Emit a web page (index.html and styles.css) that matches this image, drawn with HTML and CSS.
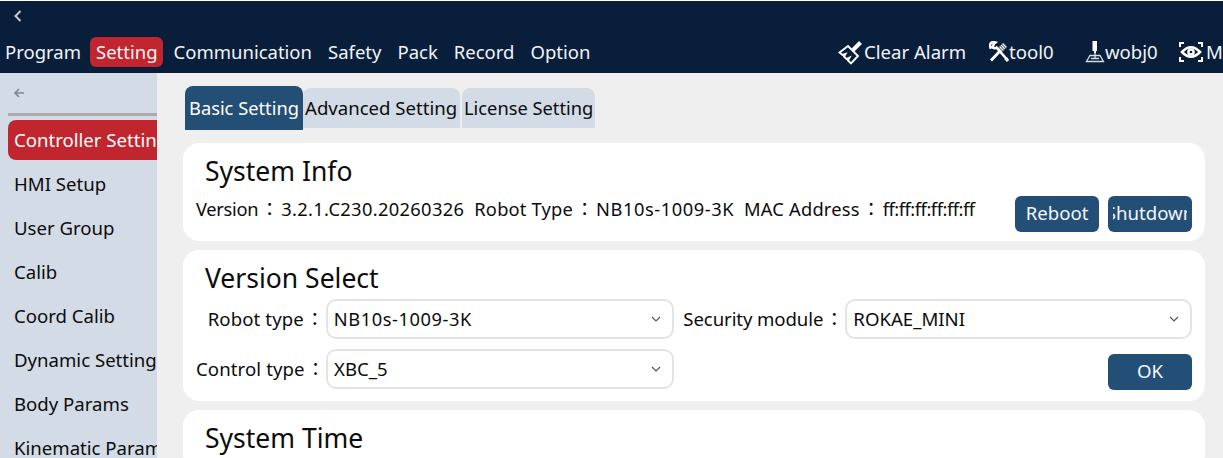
FILE: index.html
```html
<!DOCTYPE html>
<html lang="en">
<head>
<meta charset="utf-8">
<title>Setting</title>
<link rel="stylesheet" href="styles.css">
</head>
<body>
<div class="app">
  <header class="header">
    <div class="back-row">
      <svg class="chev" viewBox="0 0 10 14" width="10" height="14"><path d="M7.5 2 L2.5 7 L7.5 12" fill="none" stroke="#c4c9d0" stroke-width="2"/></svg>
    </div>
    <nav class="nav">
      <div class="menu">
        <span class="menu-item">Program</span>
        <span class="menu-item active">Setting</span>
        <span class="menu-item">Communication</span>
        <span class="menu-item">Safety</span>
        <span class="menu-item">Pack</span>
        <span class="menu-item">Record</span>
        <span class="menu-item">Option</span>
      </div>
      <div class="status">
        <span class="status-item s-alarm">
          <svg viewBox="0 0 26 26" width="26" height="26"><g fill="none" stroke="#fff" stroke-linejoin="miter"><path d="M1.5 13.5 L10 7 L20 17 L13 24.5 L10 21.5 L11.5 18.5 L8.5 20 L6 17.5 L7.5 15 L4.5 16 Z" stroke-width="1.9"/><path d="M15 11 L22.5 3.5" stroke-width="4"/></g></svg>
          Clear Alarm</span>
        <span class="status-item s-tool">
          <svg viewBox="0 0 20 22" width="20" height="22"><g fill="none" stroke="#fff"><path d="M6.5 1.5 C2.5 0 0 3 1.4 6.6 L4 5.6 L4.8 2.8 Z M3.4 6.4 Q6 8 7.6 6.6 L18 18.5" stroke-width="2.5"/><path d="M16.5 17 L19 20" stroke-width="3.2"/><path d="M11 10 L2 19.5" stroke-width="2.8"/><path d="M10.5 9.5 L16.5 3.5" stroke-width="5.5" stroke-dasharray="1.4 .7"/></g></svg>
          tool0</span>
        <span class="status-item s-wobj">
          <svg viewBox="0 0 20 22" width="20" height="22"><path d="M7.5 0 H12 V10 H11 V12 H9 V10 H7.5 Z" fill="#fff"/><path d="M5 14.5 H15 L18.5 20.5 H1.5 Z M10 12 V17.5 M6 17.5 H14" fill="none" stroke="#d8dde3" stroke-width="1.3"/></svg>
          wobj0</span>
        <span class="status-item s-eye">
          <svg viewBox="0 0 24 20" width="24" height="20"><g fill="none" stroke="#fff"><path d="M1 5 V1 H5 M19 1 H23 V5 M1 15 V19 H5 M19 19 H23 V15" stroke-width="2"/><path d="M3 10 Q12 0.5 21 10 Q12 19.5 3 10 Z" stroke-width="2.6"/></g><circle cx="12" cy="10" r="3.8" fill="#fff"/><circle cx="12" cy="10" r="1.3" fill="#081e3a"/></svg>
          MDI</span>
      </div>
    </nav>
  </header>
  <div class="body">
    <aside class="side">
      <div class="side-back">
        <svg viewBox="0 0 12 12" width="12" height="12"><path d="M6 2 L2 6 L6 10 M2 6 H11" fill="none" stroke="#808890" stroke-width="1.7"/></svg>
      </div>
      <div class="side-rule"></div>
      <ul class="side-list">
        <li class="side-item active">Controller Setting</li>
        <li class="side-item">HMI Setup</li>
        <li class="side-item">User Group</li>
        <li class="side-item">Calib</li>
        <li class="side-item">Coord Calib</li>
        <li class="side-item">Dynamic Setting</li>
        <li class="side-item">Body Params</li>
        <li class="side-item">Kinematic Params</li>
      </ul>
    </aside>
    <main class="main">
      <div class="tabs">
        <span class="tab current">Basic Setting</span>
        <span class="tab t-adv">Advanced Setting</span>
        <span class="tab t-lic">License Setting</span>
      </div>
      <section class="card c-info">
        <h2 class="title">System Info</h2>
        <div class="info-row">
          <div class="info">
            <span><span class="k-ver">Version</span><span class="colon">：</span><span class="v-ver">3.2.1.C230.20260326</span></span>
            <span><span class="k-rt">Robot Type</span><span class="colon">：</span><span class="v-rt">NB10s-1009-3K</span></span>
            <span><span class="k-mac">MAC Address</span><span class="colon">：</span><span class="v-mac">ff:ff:ff:ff:ff:ff</span></span>
          </div>
          <div class="btns">
            <button class="btn">Reboot</button>
            <button class="btn"><span class="clip">Shutdown</span></button>
          </div>
        </div>
      </section>
      <section class="card c-ver">
        <h2 class="title">Version Select</h2>
        <div class="form-row">
          <label class="lbl l-robot">Robot type<span class="colon">：</span></label>
          <div class="sel s-a"><span class="v-rt">NB10s-1009-3K</span><svg viewBox="0 0 10 6" width="10" height="6"><path d="M1 1 L5 5 L9 1" fill="none" stroke="#555" stroke-width="1.2"/></svg></div>
          <label class="lbl l-sec">Security module<span class="colon">：</span></label>
          <div class="sel s-b"><span>ROKAE_MINI</span><svg viewBox="0 0 10 6" width="10" height="6"><path d="M1 1 L5 5 L9 1" fill="none" stroke="#555" stroke-width="1.2"/></svg></div>
        </div>
        <div class="form-row r2">
          <label class="lbl l-ctl">Control type<span class="colon">：</span></label>
          <div class="sel s-a"><span>XBC_5</span><svg viewBox="0 0 10 6" width="10" height="6"><path d="M1 1 L5 5 L9 1" fill="none" stroke="#555" stroke-width="1.2"/></svg></div>
          <button class="btn ok">OK</button>
        </div>
      </section>
      <section class="card c-time">
        <h2 class="title">System Time</h2>
      </section>
    </main>
  </div>
</div>
</body>
</html>
```
FILE: styles.css
```css
* { box-sizing: border-box; margin: 0; padding: 0; }
html, body { width: 1223px; height: 458px; overflow: hidden; background: #fff; }
body { font-family: "Noto Sans", "Noto Sans CJK TC", "Open Sans", sans-serif; font-size: 18.6px; color: #0c0c0c; }
.app { height: 458px; padding-top: 1px; display: flex; flex-direction: column; }

.header { height: 72px; background: #081e3a; color: #f2f5f8; flex: none; }
.back-row { height: 31px; padding: 8px 0 0 13px; display: flex; }
.nav { height: 36px; margin-top: 5px; display: flex; justify-content: space-between; overflow: hidden; }
.menu { display: flex; }
.menu-item { height: 30px; line-height: 30px; padding: 0 5.5px; margin-right: 5px; border-radius: 6px; white-space: nowrap; font-size: 18.5px; }
.menu-item:first-child { padding-left: 5px; margin-right: 4px; }
.menu-item.active { background: #c1252d; }
.status { display: flex; width: 385px; flex: none; overflow: hidden; white-space: nowrap; }
.status-item { display: flex; align-items: center; height: 30px; flex: none; line-height: 30px; }
.s-alarm { width: 151px; }
.s-tool { width: 96px; }
.s-wobj { width: 94px; }
.s-eye svg { margin-right: 3px; }

.body { flex: 1; display: flex; min-height: 0; }
.side { width: 157px; flex: none; background: #d3dbe6; overflow: hidden; }
.side-back { height: 40px; padding: 14px 0 0 13px; }
.side-back svg { display: block; }
.side-rule { height: 3px; margin-left: 8px; background: #a9abad; }
.side-list { list-style: none; margin-top: 4px; padding-left: 8px; }
.side-item { height: 40px; line-height: 40px; margin-bottom: 4px; padding-left: 6px; white-space: nowrap; overflow: hidden; }
.side-item.active { background: #c1252d; color: #fff; border-radius: 8px 0 0 8px; }

.main { flex: 1; background: #efefef; padding: 13px 18px 0 26px; overflow: hidden; min-width: 0; }
.tabs { display: flex; align-items: center; height: 44px; margin: 0 0 13px 2px; }
.tab { height: 40px; line-height: 40px; padding: 0 2px; background: #d3dbe6; white-space: nowrap; border-radius: 8px 8px 0 0; }
.tab.current { height: 44px; line-height: 44px; padding: 0 4px; background: #234e75; color: #fff; width: 118px; font-size: 18.3px; }
.t-adv { width: 157px; margin-right: 2px; }
.t-lic { width: 133px; font-size: 18.3px; }

.card { background: #fff; border-radius: 16px; margin-bottom: 9px; padding: 0 13px; }
.title { font-size: 26.5px; font-weight: 400; line-height: 34px; padding: 11px 0 0 9px; }
.c-info { height: 98px; }
.info-row { display: flex; justify-content: space-between; }
.info { display: flex; gap: 10px; padding-top: 9px; white-space: nowrap; line-height: 24px; font-size: 18.3px; }
.colon { display: inline-block; width: 23px; text-align: center; line-height: 24px; }
.k-ver { letter-spacing: -.3px; }
.k-rt { letter-spacing: .2px; }
.k-mac { letter-spacing: .2px; }
.v-ver { letter-spacing: .34px; }
.v-rt { letter-spacing: .55px; font-size: 18.3px; }
.v-mac { letter-spacing: -.47px; }
.btns { display: flex; gap: 9px; margin-top: 8px; }
.btn { width: 84px; height: 36px; border: 0; border-radius: 6px; background: #234e75; color: #f4f7fa; font: inherit; line-height: 24px; padding-bottom: 2px; overflow: hidden; display: flex; align-items: center; justify-content: center; flex: none; }
.clip { width: 74px; overflow: hidden; display: flex; justify-content: center; white-space: nowrap; }
.c-ver { height: 151px; }
.form-row { display: flex; align-items: center; }
.c-ver .title { height: 49px; padding-top: 11px; }
.r2 { margin-top: 9px; }
.lbl { white-space: nowrap; text-align: right; line-height: 24px; letter-spacing: .1px; }
.lbl .colon { width: 22px; }
.l-robot, .l-ctl { width: 130px; }
.l-sec { width: 172px; letter-spacing: -.1px; }
.sel { height: 40px; border: 2px solid #e4e4e4; border-radius: 10px; background: #fff; display: flex; align-items: center; justify-content: space-between; padding: 0 11px 0 6px; line-height: 24px; }
.s-a { width: 348px; }
.s-b { width: 347px; }
.ok { margin-left: auto; align-self: flex-start; margin-top: 6px; }
.c-time { height: 60px; margin-bottom: 0; }
```
